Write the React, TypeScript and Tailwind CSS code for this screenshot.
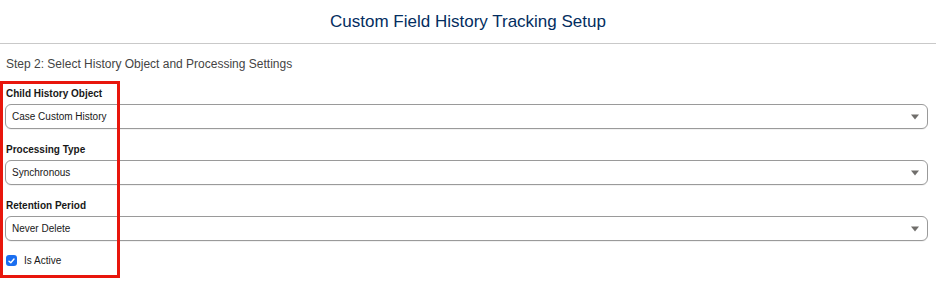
import React from "react";

function Caret() {
  return (
    <svg width="10" height="6" viewBox="0 0 10 6" className="shrink-0">
      <path d="M1 0.5 L9 0.5 L5 5.5 Z" fill="#706e6b" />
    </svg>
  );
}

function SelectField({ label, value }: { label: string; value: string }) {
  return (
    <div className="flex flex-col">
      <div className="h-[20px] flex items-end pb-[2px] text-[10px] font-bold text-[#181818] leading-none pl-[1px]">{label}</div>
      <div className="mt-[3px] h-[25px] flex items-center justify-between rounded-[6px] border border-[#9a9a9a] bg-white pl-[6px] pr-[7px] shadow-[0_1px_0_rgba(0,0,0,0.05)]">
        <span className="text-[10px] text-[#181818]">{value}</span>
        <Caret />
      </div>
    </div>
  );
}

export default function App() {
  return (
    <div
      className="relative w-[936px] h-[286px] bg-white overflow-hidden"
      style={{ fontFamily: "'Liberation Sans', Arial, sans-serif" }}
    >
      <div className="h-[44px] flex items-center justify-center border-b border-[#c9c9c9]">
        <h1 className="text-[17px] text-[#032d60] font-normal">Custom Field History Tracking Setup</h1>
      </div>
      <div className="pl-[5px] pr-[8px]">
        <div className="pl-[1px] pt-[12px] text-[12px] text-[#444444] leading-[16px]">
          Step 2: Select History Object and Processing Settings
        </div>
        <div className="mt-[9px] flex flex-col gap-[8px]">
          <SelectField label="Child History Object" value="Case Custom History" />
          <SelectField label="Processing Type" value="Synchronous" />
          <SelectField label="Retention Period" value="Never Delete" />
        </div>
        <div className="mt-[12px] flex items-center gap-[7px] pl-[1px]">
          <span className="w-[11px] h-[11px] rounded-[3px] bg-[#1a6ef0] flex items-center justify-center">
            <svg width="7" height="6" viewBox="0 0 7 6">
              <path d="M1 3.2 L2.8 4.8 L6 1" stroke="white" strokeWidth="1.4" fill="none" strokeLinecap="round" strokeLinejoin="round" />
            </svg>
          </span>
          <span className="text-[10px] text-[#181818]">Is Active</span>
        </div>
      </div>
      <div className="absolute left-0 top-[81px] w-[120px] h-[197px] border-[3px] border-[#e8160c] pointer-events-none" />
    </div>
  );
}
